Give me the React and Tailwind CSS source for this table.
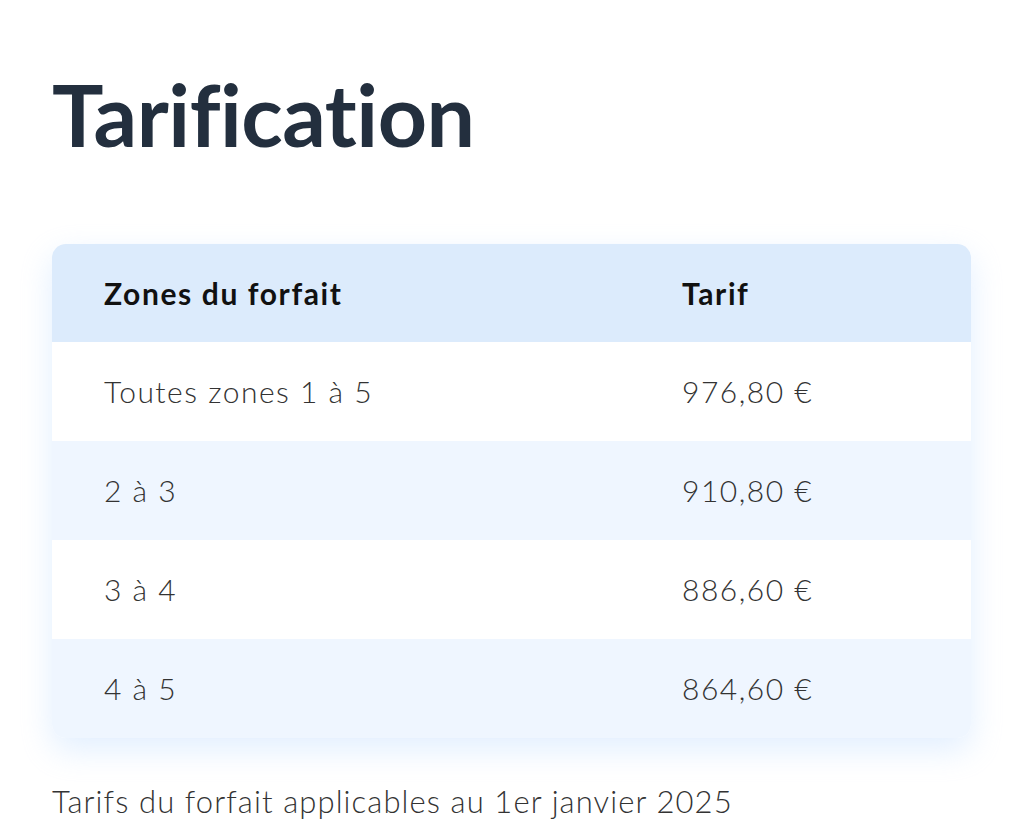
export default function App() {
  const rows = [
    ["Toutes zones 1 à 5", "976,80 €"],
    ["2 à 3", "910,80 €"],
    ["3 à 4", "886,60 €"],
    ["4 à 5", "864,60 €"],
  ];

  return (
    <div className="min-h-screen bg-white px-[52px] pt-[62px] font-['Lato','Noto_Sans',sans-serif]">
      <h1 className="text-[86px] leading-[104px] font-bold text-[#232f3e] tracking-[-0.5px]">
        Tarification
      </h1>

      <div className="mt-[78px] w-[919px] rounded-[14px] overflow-hidden shadow-[0_12px_32px_rgba(191,219,254,0.45)]">
        <div className="flex items-center h-[98px] bg-[#dcebfc] text-[30px] font-bold text-[#111] tracking-[1.6px]">
          <div className="w-[630px] pl-[52px]">Zones du forfait</div>
          <div>Tarif</div>
        </div>
        {rows.map(([zone, price], i) => (
          <div
            key={zone}
            className={
              "flex items-center h-[99px] text-[30px] text-[#333] font-light tracking-[1.5px] " +
              (i % 2 === 0 ? "bg-white" : "bg-[#eff6ff]")
            }
          >
            <div className="w-[630px] pl-[52px]">{zone}</div>
            <div>{price}</div>
          </div>
        ))}
      </div>

      <p className="mt-[40px] text-[31px] font-light text-[#333] tracking-[1.1px]">
        Tarifs du forfait applicables au 1er janvier 2025
      </p>
    </div>
  );
}
